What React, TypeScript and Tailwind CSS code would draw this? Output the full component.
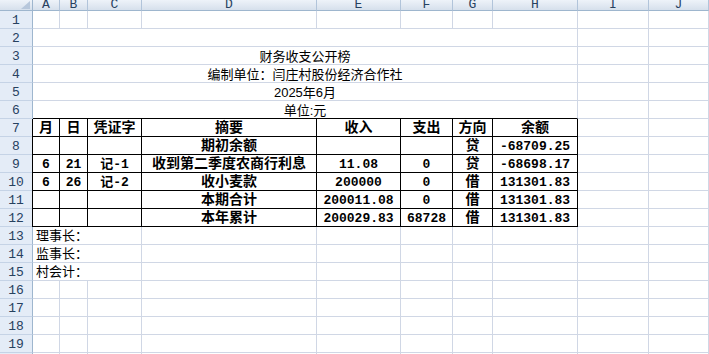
import React from 'react';

const COLS = ['A', 'B', 'C', 'D', 'E', 'F', 'G', 'H', 'I', 'J'];
const GRID = 'border-r border-b border-[#d0d7e5]';
const BLK = 'border-r border-b border-black';

const TABLE: string[][] = [
  ['月', '日', '凭证字', '摘要', '收入', '支出', '方向', '余额'],
  ['', '', '', '期初余额', '', '', '贷', '-68709.25'],
  ['6', '21', '记-1', '收到第二季度农商行利息', '11.08', '0', '贷', '-68698.17'],
  ['6', '26', '记-2', '收小麦款', '200000', '0', '借', '131301.83'],
  ['', '', '', '本期合计', '200011.08', '0', '借', '131301.83'],
  ['', '', '', '本年累计', '200029.83', '68728', '借', '131301.83'],
];

function RowHead({ n }: { n: number }) {
  return (
    <div className="h-[18px] bg-[#e4ecf7] border-r border-r-[#9eb6ce] border-b border-b-[#c5d3e6] flex items-center justify-center text-[13px] leading-none text-[#27415f] font-[family-name:Liberation_Mono,monospace] pt-[1px]">
      {n}
    </div>
  );
}

function Blank({ n = 10 }: { n?: number }) {
  return (
    <>
      {Array.from({ length: n }).map((_, i) => (
        <div key={i} className={`h-[18px] ${GRID}`} />
      ))}
    </>
  );
}

function isCJKOnly(s: string) {
  return /[\u4e00-\u9fff]/.test(s) && !/[0-9]/.test(s);
}

export default function App() {
  const rows: React.ReactNode[] = [];

  // header
  rows.push(
    <div key="corner" className="h-[11px] bg-linear-to-b from-[#eef3f9] to-[#d6e0ec] border-r border-b border-[#9eb6ce] relative overflow-hidden">
      <svg className="absolute right-[2px] bottom-[1px]" width="9" height="8" viewBox="0 0 9 8">
        <polygon points="9,0 9,8 0,8" fill="#b7c7db" />
      </svg>
    </div>
  );
  COLS.forEach((c) => {
    rows.push(
      <div
        key={'h' + c}
        className="h-[11px] overflow-hidden bg-linear-to-b from-[#eef3f9] to-[#d6e0ec] border-r border-r-[#b1c4da] border-b border-b-[#9eb6ce] flex justify-center"
      >
        <span className="block text-[13px] leading-[13px] -mt-[2px] text-[#27415f] font-[family-name:Liberation_Mono,monospace]">
          {c}
        </span>
      </div>
    );
  });

  // row 1
  rows.push(<RowHead key="r1" n={1} />);
  rows.push(<Blank key="b1" />);

  // rows 2-6
  const titles: [number, string][] = [
    [2, ''],
    [3, '财务收支公开榜'],
    [4, '编制单位：闫庄村股份经济合作社'],
    [5, '2025年6月'],
    [6, '单位:元'],
  ];
  titles.forEach(([n, t]) => {
    rows.push(<RowHead key={'r' + n} n={n} />);
    rows.push(
      <div
        key={'t' + n}
        className={`col-span-8 h-[18px] border-r border-r-[#d0d7e5] border-b ${n === 6 ? 'border-b-black' : 'border-b-[#d0d7e5]'} flex items-center justify-center pt-[1px] text-[13px] leading-none text-black whitespace-nowrap font-[family-name:Liberation_Sans,Noto_Sans_CJK_SC,sans-serif]`}
      >
        {t}
      </div>
    );
    rows.push(<Blank key={'tb' + n} n={2} />);
  });

  // table rows 7-12
  TABLE.forEach((r, i) => {
    const n = 7 + i;
    rows.push(<RowHead key={'r' + n} n={n} />);
    r.forEach((v, j) => {
      const cjk = isCJKOnly(v);
      rows.push(
        <div
          key={'c' + n + '-' + j}
          className={`h-[18px] ${BLK} ${j === 0 ? 'shadow-[-1px_0_0_#000]' : ''} flex items-center justify-center leading-none font-bold text-black whitespace-nowrap ${
            cjk
              ? 'text-[14px] pb-[4px] font-[family-name:Noto_Sans_CJK_SC,sans-serif]'
              : 'text-[13px] pt-[1px] font-[family-name:Liberation_Mono,Noto_Sans_CJK_SC,monospace]'
          }`}
        >
          {v}
        </div>
      );
    });
    rows.push(<Blank key={'tb' + n} n={2} />);
  });

  // rows 13-15
  ['理事长：', '监事长：', '村会计：'].forEach((t, i) => {
    const n = 13 + i;
    rows.push(<RowHead key={'r' + n} n={n} />);
    rows.push(
      <div
        key={'s' + n}
        className={`col-span-3 h-[18px] ${GRID} flex items-center pl-[3px] pb-[3px] text-[13px] leading-none text-black whitespace-nowrap font-[family-name:Noto_Sans_CJK_SC,sans-serif]`}
      >
        {t}
      </div>
    );
    rows.push(<Blank key={'sb' + n} n={7} />);
  });

  // rows 16-20
  for (let n = 16; n <= 20; n++) {
    rows.push(<RowHead key={'r' + n} n={n} />);
    rows.push(<Blank key={'b' + n} />);
  }

  return (
    <div className="w-[709px] h-[354px] overflow-hidden bg-white">
      <div className="grid grid-cols-[33px_27px_28px_54px_175px_84px_52px_40px_85px_71px_1fr] w-[709px]">
        {rows}
      </div>
    </div>
  );
}
